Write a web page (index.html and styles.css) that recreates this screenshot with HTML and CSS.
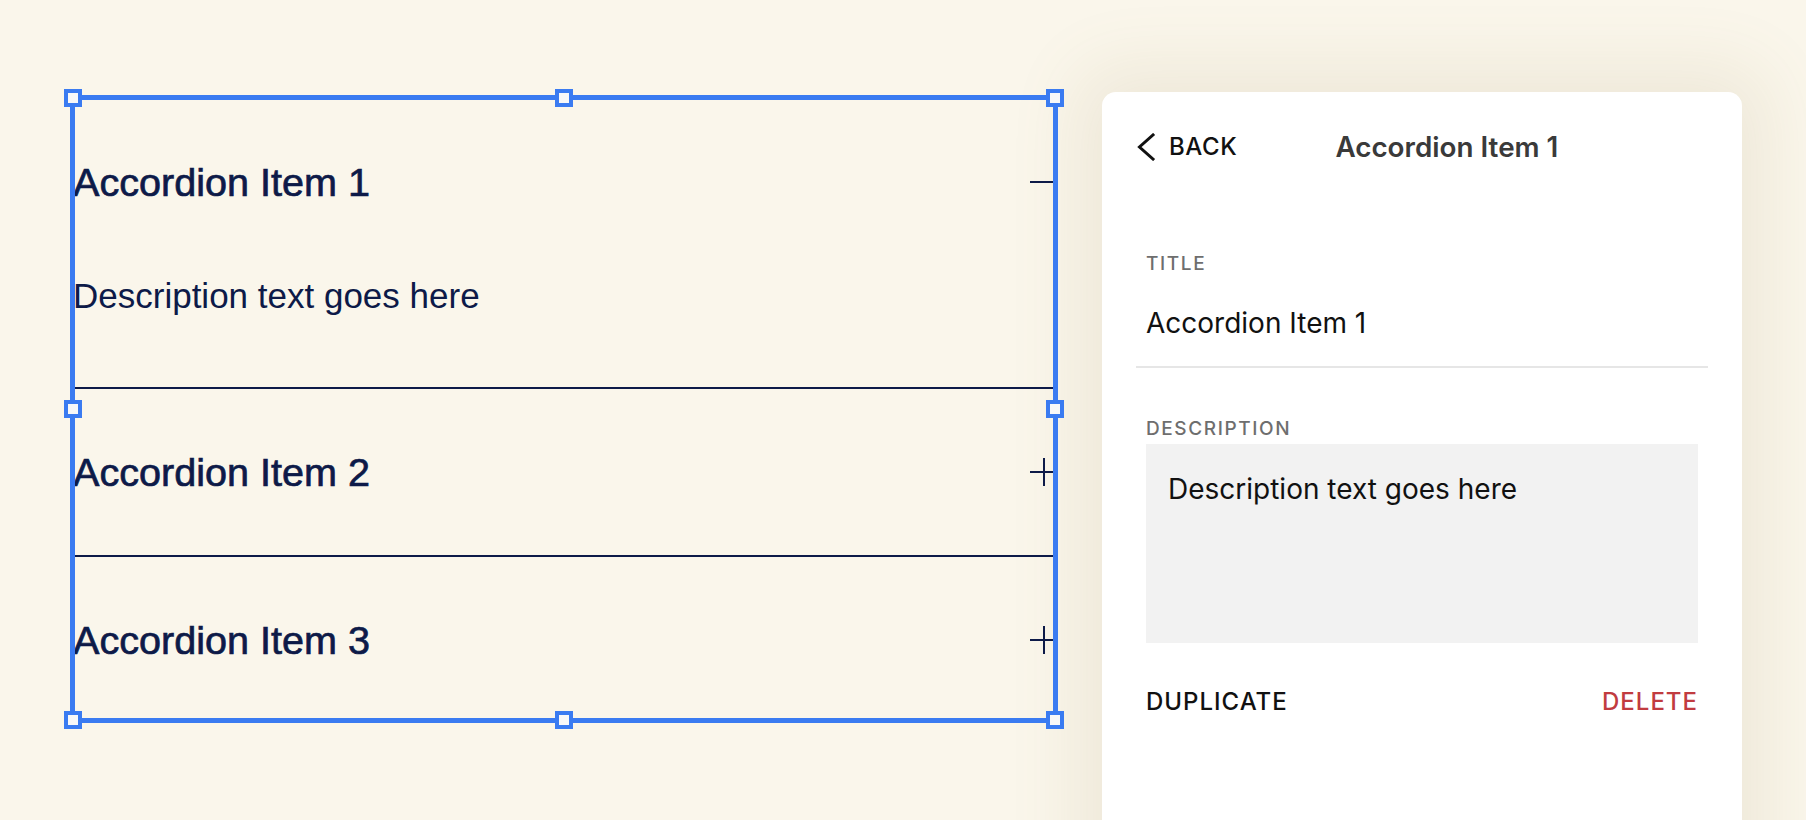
FILE: index.html
```html
<!DOCTYPE html>
<html lang="en">
<head>
<meta charset="utf-8">
<title>Accordion editor</title>
<link rel="stylesheet" href="styles.css">
</head>
<body>
<div class="page">
  <main class="canvas">
    <div class="accordion">
      <div class="item">
        <div class="item-head">
          <span class="item-title">Accordion Item 1</span>
          <span class="toggle minus"></span>
        </div>
        <div class="item-body">Description text goes here</div>
      </div>
      <div class="item">
        <div class="item-head">
          <span class="item-title">Accordion Item 2</span>
          <span class="toggle plus"></span>
        </div>
      </div>
      <div class="item last">
        <div class="item-head">
          <span class="item-title">Accordion Item 3</span>
          <span class="toggle plus"></span>
        </div>
      </div>
      <div class="selection">
        <span class="handle h-tl"></span>
        <span class="handle h-tc"></span>
        <span class="handle h-tr"></span>
        <span class="handle h-ml"></span>
        <span class="handle h-mr"></span>
        <span class="handle h-bl"></span>
        <span class="handle h-bc"></span>
        <span class="handle h-br"></span>
      </div>
    </div>
  </main>
  <aside class="panel">
    <header class="panel-head">
      <button class="back">
        <svg width="20" height="28" viewBox="0 0 20 28" aria-hidden="true"><polyline points="17,2 3.5,14 17,26" fill="none" stroke="#111" stroke-width="3" stroke-linecap="square" stroke-linejoin="miter"/></svg>
        <span>BACK</span>
      </button>
      <h1 class="panel-title">Accordion Item 1</h1>
    </header>
    <section class="field field-title">
      <div class="label">TITLE</div>
      <div class="input-text">Accordion Item 1</div>
    </section>
    <section class="field field-desc">
      <div class="label">DESCRIPTION</div>
      <div class="textarea">Description text goes here</div>
    </section>
    <div class="actions">
      <span class="action">DUPLICATE</span>
      <span class="action danger">DELETE</span>
    </div>
  </aside>
</div>
</body>
</html>
```
FILE: styles.css
```css
* { box-sizing: border-box; }
html, body {
  margin: 0;
  padding: 0;
  height: 820px;
  overflow: hidden;
  background: #faf6eb;
}
.page {
  display: flex;
  height: 820px;
  background: #faf6eb;
}
.canvas {
  flex: 1;
  padding: 99px 0 0 73px;
}
.accordion {
  position: relative;
  width: 982px;
  font-family: "Liberation Sans", Arial, sans-serif;
  color: #0d1a48;
}
.item { border-bottom: 2px solid #0d1a48; }
.item.last { border-bottom: none; }
.item-head {
  height: 166px;
  display: flex;
  align-items: center;
  justify-content: space-between;
}
.item-title {
  font-size: 39.6px;
  line-height: 48px;
  -webkit-text-stroke: 0.7px #0d1a48;
}
.item-body {
  font-size: 35px;
  line-height: 48px;
  padding: 7px 0 67px;
}
.toggle {
  position: relative;
  width: 28px;
  height: 28px;
  margin-right: -3px;
}
.toggle::before {
  content: "";
  position: absolute;
  left: 0;
  right: 0;
  top: 13px;
  height: 2px;
  background: #0d1a48;
}
.toggle.plus::after {
  content: "";
  position: absolute;
  top: 0;
  bottom: 0;
  left: 13px;
  width: 2px;
  background: #0d1a48;
}
.selection {
  position: absolute;
  left: -3px;
  top: -4px;
  right: -3px;
  bottom: 0;
  border: 5px solid #3a7bf1;
  pointer-events: none;
}
.handle {
  position: absolute;
  width: 18px;
  height: 18px;
  border: 4px solid #3a7bf1;
  background: #f8f8f8;
}
.h-tl { left: -11px; top: -11px; }
.h-tc { left: calc(50% - 9px); top: -11px; }
.h-tr { right: -11px; top: -11px; }
.h-ml { left: -11px; top: calc(50% - 9px); }
.h-mr { right: -11px; top: calc(50% - 9px); }
.h-bl { left: -11px; bottom: -11px; }
.h-bc { left: calc(50% - 9px); bottom: -11px; }
.h-br { right: -11px; bottom: -11px; }

.panel {
  width: 640px;
  margin: 92px 64px 0 0;
  height: 800px;
  background: #ffffff;
  border-radius: 14px 14px 0 0;
  box-shadow: 0 0 70px 25px rgba(150, 125, 70, 0.11);
  padding: 0 34px;
  font-family: Inter, "Liberation Sans", sans-serif;
  color: #111;
  flex: none;
}
.panel-head {
  display: flex;
  align-items: center;
  gap: 98px;
  padding: 38px 0;
  height: 110px;
}
.back {
  display: flex;
  align-items: center;
  gap: 13px;
  border: 0;
  background: none;
  padding: 0;
  font-family: inherit;
  font-size: 24px;
  font-weight: 500;
  letter-spacing: 0.6px;
  color: #111;
  line-height: 34px;
}
.back svg { display: block; }
.panel-title {
  margin: 0;
  font-size: 27.8px;
  font-weight: 600;
  color: #3a3a3a;
  line-height: 34px;
  letter-spacing: 0;
}
.field { padding: 0 10px; }
.field-title {
  padding-top: 52px;
  padding-bottom: 23px;
  border-bottom: 2px solid #e6e6e6;
}
.label {
  font-size: 19px;
  line-height: 20px;
  font-weight: 500;
  letter-spacing: 1.6px;
  color: #6e6e6e;
}
.field-title .label { margin-bottom: 29px; }
.input-text {
  font-size: 28px;
  line-height: 40px;
  color: #111;
}
.field-desc { padding-top: 51px; }
.field-desc .label { margin-bottom: 5px; }
.textarea {
  height: 199px;
  background: #f2f2f2;
  padding: 25px 22px;
  font-size: 28px;
  line-height: 40px;
  color: #111;
}
.actions {
  display: flex;
  justify-content: space-between;
  padding: 44px 10px 0;
}
.action {
  font-size: 24px;
  font-weight: 500;
  line-height: 30px;
  letter-spacing: 1px;
  color: #111;
}
.action.danger { color: #c13b40; }
```
